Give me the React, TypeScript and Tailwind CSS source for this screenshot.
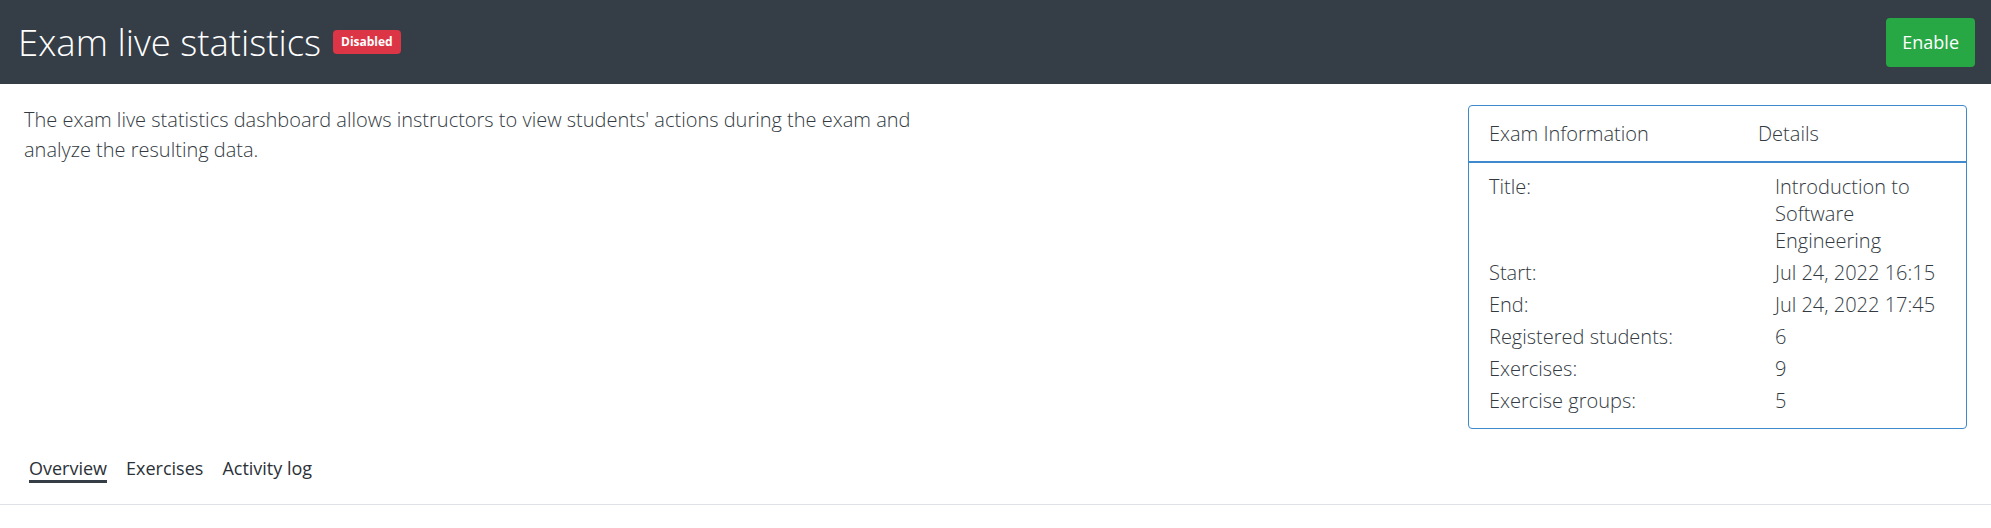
const examInfo = [
  { label: "Title:", value: "Introduction to Software Engineering" },
  { label: "Start:", value: "Jul 24, 2022 16:15" },
  { label: "End:", value: "Jul 24, 2022 17:45" },
  { label: "Registered students:", value: "6" },
  { label: "Exercises:", value: "9" },
  { label: "Exercise groups:", value: "5" },
];

const tabs = ["Overview", "Exercises", "Activity log"];

const App = () => {
  return (
    <div className="min-h-screen bg-white font-['Open_Sans',sans-serif] text-[#333a42]">
      <header className="flex h-[84px] items-center justify-between bg-[#353d47] pl-[18px] pr-4">
        <div className="flex items-center gap-[12px]">
          <h1 className="text-[36.5px] font-light leading-none text-white">Exam live statistics</h1>
          <span className="rounded-[4px] bg-[#dc3545] px-2 py-[4px] text-[12px] font-bold leading-4 text-white">
            Disabled
          </span>
        </div>
        <button className="h-[49px] rounded-[4px] bg-[#28a745] px-[16px] text-[18px] text-white">Enable</button>
      </header>

      <div className="flex items-start justify-between pl-6 pr-6 pt-[21px]">
        <p className="max-w-[930px] text-[20px] font-light leading-[30px] text-[#333a42]">
          The exam live statistics dashboard allows instructors to view students' actions during the exam and analyze
          the resulting data.
        </p>

        <div className="w-[499px] rounded-[4px] border border-[#3e8acc] text-[20px] font-light leading-[27px]">
          <div className="grid grid-cols-[269px_1fr] border-b-2 border-[#3e8acc] px-5 py-[14px]">
            <span>Exam Information</span>
            <span>Details</span>
          </div>
          <div className="pb-[12px] pl-5 pr-2 pt-[7px]">
            {examInfo.map((row) => (
              <div key={row.label} className="grid grid-cols-[286px_1fr] py-[2.5px]">
                <span>{row.label}</span>
                <span>{row.value}</span>
              </div>
            ))}
          </div>
        </div>
      </div>

      <nav className="mt-[27px] flex gap-[19px] border-b border-[#dee2e6] pb-[21px] pl-[29px]">
        {tabs.map((tab, i) => (
          <span
            key={tab}
            className={
              i === 0
                ? "border-b-[3px] border-[#353d47] text-[18px] leading-[24px] text-[#2b3138]"
                : "border-b-[3px] border-transparent text-[18px] leading-[24px] text-[#2b3138]"
            }
          >
            {tab}
          </span>
        ))}
      </nav>
    </div>
  );
};

export default App;
